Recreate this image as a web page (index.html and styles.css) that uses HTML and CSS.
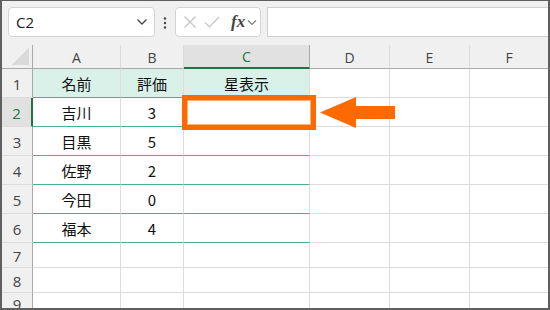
FILE: index.html
```html
<!DOCTYPE html>
<html lang="ja">
<head>
<meta charset="utf-8">
<link rel="stylesheet" href="styles.css">
</head>
<body>
<div class="frame">
  <div class="toolbar">
    <div class="namebox">
      <span class="ref">C2</span>
      <svg class="chev" width="12" height="8" viewBox="0 0 12 8"><polyline points="1.5,1.5 6,6 10.5,1.5" fill="none" stroke="#444" stroke-width="1.3"/></svg>
    </div>
    <svg class="dots" width="4" height="12" viewBox="0 0 4 12"><circle cx="2" cy="1.5" r="1.2" fill="#444"/><circle cx="2" cy="6" r="1.2" fill="#444"/><circle cx="2" cy="10.5" r="1.2" fill="#444"/></svg>
    <div class="fbtns">
      <svg width="14" height="14" viewBox="0 0 14 14"><path d="M1.5 1.5 L12.5 12.5 M12.5 1.5 L1.5 12.5" stroke="#c4c4c4" stroke-width="1.2" fill="none"/></svg>
      <svg width="16" height="14" viewBox="0 0 16 14"><polyline points="1,7.5 5.5,12 15,2" stroke="#c4c4c4" stroke-width="1.2" fill="none"/></svg>
      <span class="fx">fx</span>
      <svg class="chev2" width="10" height="7" viewBox="0 0 10 7"><polyline points="1,1.5 5,5.5 9,1.5" fill="none" stroke="#777" stroke-width="1.2"/></svg>
    </div>
    <div class="formula"></div>
  </div>
  <div class="grid">
    <div class="hd corner"><span class="tri"></span></div>
    <div class="hd col">A</div>
    <div class="hd col">B</div>
    <div class="hd col sel">C</div>
    <div class="hd col">D</div>
    <div class="hd col">E</div>
    <div class="hd col last">F</div>

    <div class="hd row">1</div>
    <div class="c t th">名前</div>
    <div class="c t th">評価</div>
    <div class="c t th">星表示</div>
    <div class="c"></div><div class="c"></div><div class="c last"></div>

    <div class="hd row rsel">2</div>
    <div class="c t">吉川</div>
    <div class="c t">3</div>
    <div class="c t"></div>
    <div class="c"></div><div class="c"></div><div class="c last"></div>

    <div class="hd row">3</div>
    <div class="c t">目黒</div>
    <div class="c t">5</div>
    <div class="c t"></div>
    <div class="c"></div><div class="c"></div><div class="c last"></div>

    <div class="hd row">4</div>
    <div class="c t">佐野</div>
    <div class="c t">2</div>
    <div class="c t"></div>
    <div class="c"></div><div class="c"></div><div class="c last"></div>

    <div class="hd row">5</div>
    <div class="c t">今田</div>
    <div class="c t">0</div>
    <div class="c t"></div>
    <div class="c"></div><div class="c"></div><div class="c last"></div>

    <div class="hd row">6</div>
    <div class="c t">福本</div>
    <div class="c t">4</div>
    <div class="c t"></div>
    <div class="c"></div><div class="c"></div><div class="c last"></div>

    <div class="hd row">7</div>
    <div class="c"></div><div class="c"></div><div class="c"></div>
    <div class="c"></div><div class="c"></div><div class="c last"></div>

    <div class="hd row">8</div>
    <div class="c"></div><div class="c"></div><div class="c"></div>
    <div class="c"></div><div class="c"></div><div class="c last"></div>

    <div class="hd row">9</div>
    <div class="c"></div><div class="c"></div><div class="c"></div>
    <div class="c"></div><div class="c"></div><div class="c last"></div>
  </div>
  <div class="highlight"></div>
  <svg class="arrow" width="76" height="32" viewBox="0 0 76 32"><polygon points="0,15.5 36,0 36,9 75,9 75,22 36,22 36,31" fill="#ff6a00"/></svg>
</div>
</body>
</html>
```

FILE: styles.css
```css
* { box-sizing: border-box; }
html, body { margin: 0; padding: 0; }
body { width: 550px; height: 310px; overflow: hidden; background: #fff; }
.frame {
  position: relative;
  width: 550px;
  height: 310px;
  border: 2px solid #5f5f5f;
  border-top-width: 1px;
  background: #f0f0f0;
  overflow: hidden;
  font-family: "Liberation Sans", Arial, sans-serif;
}
.toolbar {
  height: 44px;
  display: flex;
  align-items: flex-start;
  padding: 6px 0 0 6px;
}
.namebox {
  width: 147px;
  height: 30px;
  background: #fff;
  border: 1px solid #d4d4d4;
  border-radius: 4px;
  display: flex;
  align-items: center;
  justify-content: space-between;
  padding: 0 6px 0 7px;
}
.ref { font-size: 15px; color: #222; font-family: "Open Sans", "Liberation Sans", sans-serif; }
.chev { display: block; }
.dots { display: block; margin: 10px 8px 0 8px; }
.fbtns {
  width: 86px;
  height: 30px;
  background: #fff;
  border: 1px solid #d4d4d4;
  border-radius: 4px;
  display: flex;
  align-items: center;
  padding: 0 0 0 7px;
  gap: 7px;
}
.fx {
  font-family: "Liberation Serif", "Times New Roman", serif;
  font-style: italic;
  font-weight: bold;
  font-size: 17px;
  color: #444;
  margin-left: 4px;
  line-height: 1;
  margin-top: -2px;
}
.chev2 { margin-left: -5px; }
.formula {
  flex: 1;
  height: 30px;
  margin-left: 6px;
  background: #fff;
  border: 1px solid #cfcfcf;
  border-right: none;
}
.grid {
  display: grid;
  grid-template-columns: 31px 88px 63px 126px 80px 80px 1fr;
  grid-template-rows: 24px 29px 29px 29px 29px 29px 29px 25px 25px 20px;
  background: #fff;
}
.hd {
  background: #f0f0f0;
  color: #444;
  font-size: 14px;
  display: flex;
  align-items: center;
  justify-content: center;
  font-family: "Open Sans", "Liberation Sans", sans-serif;
}
.col { border-bottom: 1px solid #a9a9a9; border-right: 1px solid #dcdcdc; padding-top: 1px; }
.col.last { border-right: none; }
.col.sel { background: #e1e1e1; color: #217346; border-bottom: 2px solid #217346; border-right-color: #a9a9a9; }
.corner { border-right: 1px solid #a9a9a9; border-bottom: 1px solid #a9a9a9; justify-content: flex-end; align-items: flex-end; padding: 0 3px 3px 0; }
.tri {
  width: 17px; height: 17px;
  background: linear-gradient(135deg, transparent 50%, #dadada 50%);
}
.row { border-right: 1px solid #a9a9a9; border-bottom: 1px solid #dcdcdc; font-size: 15px; padding-top: 2px; }
.row.rsel { background: #e1e1e1; color: #217346; border-right: 2px solid #217346; }
.c {
  border-right: 1px solid #dcdcdc;
  border-bottom: 1px solid #dcdcdc;
  display: flex;
  align-items: center;
  justify-content: center;
  font-family: "Noto Sans CJK JP", "Noto Sans", sans-serif;
  font-size: 15px;
  color: #111;
}
.c.last { border-right: none; }
.c.t { border-bottom: 1px solid #4caf92; }
.c.th { background: #daf1ea; }
.highlight {
  position: absolute;
  left: 180px;
  top: 94px;
  width: 134px;
  height: 35px;
  border: 5px solid #ff6a00;
  box-shadow: inset 0 0 0 1px #ffb27a;
  background: #fff;
}
.arrow {
  position: absolute;
  left: 318px;
  top: 96px;
}
```
